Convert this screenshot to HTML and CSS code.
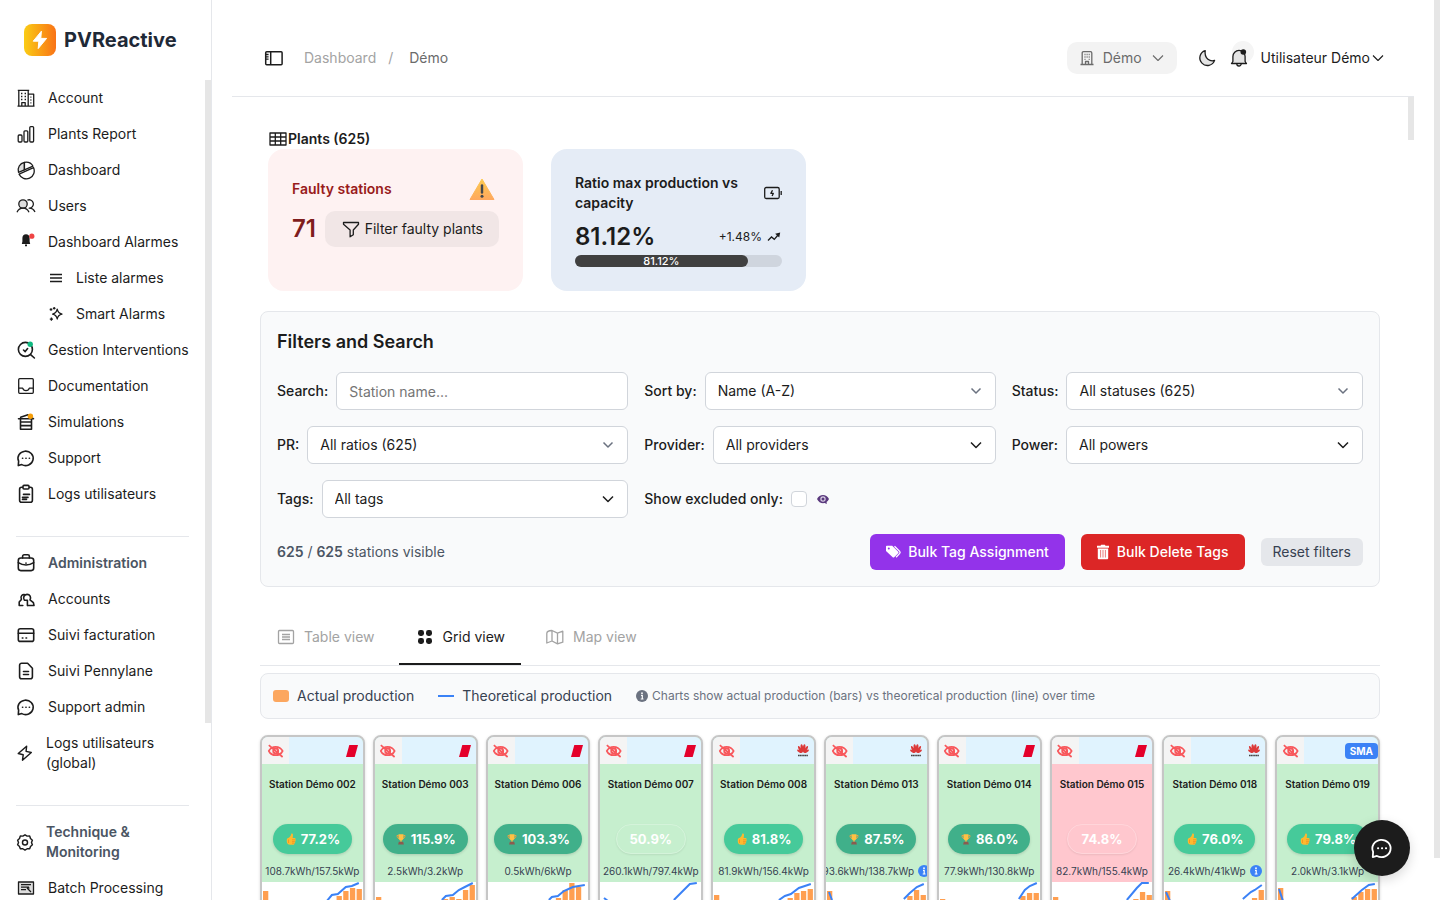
FILE: index.html
```
<!DOCTYPE html>
<html lang="fr">
<head>
    <meta charset="UTF-8">
    <meta name="viewport" content="width=device-width, initial-scale=1.0">
    <title>PVReactive</title>
    <link rel="stylesheet" href="styles.css">
</head>
<body>
    <aside class="sidebar">
        <a class="brand" href="#">
            <span class="brand-logo">
                <svg viewBox="0 0 20 20" width="20" height="20"><path d="M11.4 1.2 3.2 11.2h5.6l-.6 7.4 8.4-10.2h-5.8z" fill="#fff" stroke="#fff" stroke-linejoin="round"/></svg>
            </span>
            <span class="brand-name">PVReactive</span>
        </a>
        <div class="nav-wrap">
            <nav class="nav">
                <a class="nav-item" href="#">
                    <svg class="icon" viewBox="0 0 20 20"><path d="M1.5 18.2h17M2.8 18V2.3h9.4V18M1.8 2.3h11.4M12.2 6.2h5.5V18M5.8 18v-3.4h3.4V18"/><path d="M5 5.5h1.4M8.6 5.5H10M5 8.5h1.4M8.6 8.5H10M5 11.5h1.4M8.6 11.5H10M14.4 9.2h1M14.4 12h1M14.4 14.8h1"/></svg>
                    <span>Account</span>
                </a>
                <a class="nav-item" href="#">
                    <svg class="icon" viewBox="0 0 20 20"><rect x="2.2" y="11" width="3.8" height="7" rx="1"/><rect x="8" y="6.8" width="3.8" height="11.2" rx="1"/><rect x="13.8" y="2.6" width="3.8" height="15.4" rx="1"/></svg>
                    <span>Plants Report</span>
                </a>
                <a class="nav-item" href="#">
                    <svg class="icon" viewBox="0 0 20 20"><path d="M8.4 2.3v7.5L2.5 12.3A7.8 7.8 0 0 1 8.4 2.3z" fill="#ddd"/><path d="M8.4 2.3c3.6-.6 7 .9 8.6 3.9l-8.6 3.6z"/><path d="M17.5 7.6a7.8 7.8 0 1 1-14.4 6.6z"/></svg>
                    <span>Dashboard</span>
                </a>
                <a class="nav-item" href="#">
                    <svg class="icon" viewBox="0 0 20 20"><circle cx="7" cy="8" r="4.2" fill="#ddd"/><path d="M1 16.2c1.2-2.6 3.4-4 6-4s4.8 1.4 6 4M11.4 4.2a4.2 4.2 0 1 1 1.8 8c2.6 0 4.6 1.4 5.8 3.8"/></svg>
                    <span>Users</span>
                </a>
                <a class="nav-item" href="#">
                    <svg class="icon" viewBox="0 0 20 20"><path d="M10 2.2c-2.2 0-3.6 1.6-3.6 3.8v3.6L5.800 12h8.400l-.6-2.400V6c0-2.200-1.400-3.800-3.600-3.800z" fill="#1c1c1c" stroke="none"/><path d="M9 13.4h2" stroke-width="1.6"/><circle cx="15.8" cy="4.2" r="2.6" fill="#ef4444" stroke="none"/></svg>
                    <span>Dashboard Alarmes</span>
                </a>
                <a class="nav-item sub" href="#">
                    <svg class="icon small" viewBox="0 0 16 16"><path d="M2 4.5h12M2 8h12M2 11.5h12"/></svg>
                    <span>Liste alarmes</span>
                </a>
                <a class="nav-item sub" href="#">
                    <svg class="icon small" viewBox="0 0 16 16"><path d="M9.2 3.2c.5 2.8 1.6 4.2 4.8 4.9-3.2.7-4.3 2-4.8 4.9-.5-2.9-1.6-4.2-4.6-4.9 3-.7 4.1-2.1 4.6-4.9z"/><path d="M6.2 1v2.6M4.9 2.3h2.6M3 2.2v2.6M1.7 3.5h2.6M3.4 11.5v3.2M1.8 13.1H5"/></svg>
                    <span>Smart Alarms</span>
                </a>
                <a class="nav-item" href="#">
                    <svg class="icon bold" viewBox="0 0 20 20"><circle cx="9.4" cy="9.4" r="7"/><path d="m14.600 14.600 3.800 3.400M7.500 10l1.700 1.600 2.400-3"/><circle cx="14.2" cy="4.2" r="2.7" fill="#10b981" stroke="none"/></svg>
                    <span>Gestion Interventions</span>
                </a>
                <a class="nav-item" href="#">
                    <svg class="icon" viewBox="0 0 20 20"><rect x="2.7" y="2.7" width="14.6" height="14.6" rx="1"/><path d="M2.7 12.2h4c.4 1.6 1.6 2.4 3.300 2.400s2.900-.8 3.300-2.400h4"/></svg>
                    <span>Documentation</span>
                </a>
                <a class="nav-item" href="#">
                    <svg class="icon bold" viewBox="0 0 20 20"><path d="M2.5 6.800h15L12 2.800 4.600 5.200M4.500 7v10.200h11V7M4.500 10h11M4.500 13.600h11"/><circle cx="14.4" cy="4.2" r="2.7" fill="#f59e0b" stroke="none"/></svg>
                    <span>Simulations</span>
                </a>
                <a class="nav-item" href="#">
                    <svg class="icon bold" viewBox="0 0 20 20"><path d="M2.3 17.6l.3-4.4a7.6 7.2 0 1 1 3.2 3.4z"/><path d="M6.500 10.200h.2M9.900 10.200h.2M13.300 10.200h.2"/></svg>
                    <span>Support</span>
                </a>
                <a class="nav-item" href="#">
                    <svg class="icon bold" viewBox="0 0 20 20"><rect x="3.6" y="3.2" width="12.8" height="15" rx="2"/><rect x="7" y="1.4" width="6" height="3.6" rx="1" fill="#fff"/><path d="M7.500 10.400h6M6.500 13.400h5.500M6.500 15.400h4"/></svg>
                    <span>Logs utilisateurs</span>
                </a>
                <hr class="nav-divider">
                <a class="nav-item heading" href="#">
                    <svg class="icon bold" viewBox="0 0 20 20"><rect x="2.3" y="5" width="15.4" height="12.6" rx="2.5"/><path d="M6.600 5V3.400c0-1 .6-1.600 1.600-1.600h3.600c1 0 1.600.6 1.600 1.600V5M2.300 9.600c4.600 3 10.800 3 15.400 0M10 10v.2"/></svg>
                    <span>Administration</span>
                </a>
                <a class="nav-item" href="#">
                    <svg class="icon bold" viewBox="0 0 20 20"><path d="M8.200 10.800C6.800 9 8 5.400 11 5.400s4.400 3 3 5.400l3.400 2.800.6 2.900h-6.400M9.400 5.800C6.400 4.800 4 7 5.400 10.400L3.200 13v3.500h3.600M8.400 11.200h3v5.400"/></svg>
                    <span>Accounts</span>
                </a>
                <a class="nav-item" href="#">
                    <svg class="icon bold" viewBox="0 0 20 20"><rect x="2.3" y="3.8" width="15.4" height="12.6" rx="2"/><path d="M2.300 8.200h15.400M6.300 13h.6M10 13h.6"/></svg>
                    <span>Suivi facturation</span>
                </a>
                <a class="nav-item" href="#">
                    <svg class="icon bold" viewBox="0 0 20 20"><path d="M5.600 2.300h6l4.800 4.900v8.500a2 2 0 0 1-2 2H5.600a2 2 0 0 1-2-2V4.300a2 2 0 0 1 2-2zM7.500 10.500h5M7.500 13.500h5"/></svg>
                    <span>Suivi Pennylane</span>
                </a>
                <a class="nav-item" href="#">
                    <svg class="icon bold" viewBox="0 0 20 20"><path d="M2.3 17.6l.3-4.4a7.6 7.2 0 1 1 3.2 3.4z"/><path d="M6.500 10.200h.2M9.900 10.200h.2M13.300 10.200h.2"/></svg>
                    <span>Support admin</span>
                </a>
                <a class="nav-item wrapped" href="#">
                    <svg class="icon bold" viewBox="0 0 20 20"><path d="M11.800 2.500 2.500 10.500l5.500 1.500-.8 6L17 9.500l-5.800-1.300z"/></svg>
                    <span>Logs utilisateurs (global)</span>
                </a>
                <hr class="nav-divider">
                <a class="nav-item heading wrapped" href="#">
                    <svg class="icon bold" viewBox="0 0 20 20"><path d="M10 2l2.400 1.500 2.800-.1.900 2.700 2.100 1.900-1 2.500 1 2.500-2.100 1.900-.9 2.700-2.800-.1L10 19l-2.400-1.500-2.800.1-.9-2.700L1.800 13l1-2.500-1-2.500 2.100-1.900.9-2.700 2.800.1z"/><circle cx="10" cy="10.500" r="2.800"/></svg>
                    <span>Technique &amp; Monitoring</span>
                </a>
                <a class="nav-item" href="#">
                    <svg class="icon" viewBox="0 0 20 20"><rect x="2.5" y="4" width="15" height="12" fill="#ddd"/><path d="M5 6.700h10M5 9.200h8M5 11.700h5M11 10l4 4M11 10h2.600" stroke-width="1.2"/></svg>
                    <span>Batch Processing</span>
                </a>
            </nav>
            <div class="rail"><div class="thumb nav-thumb"></div></div>
        </div>
    </aside>

    <div class="page">
        <header class="topbar">
            <button class="icon-btn" type="button" aria-label="Toggle sidebar">
                <svg class="icon" viewBox="0 0 20 20"><rect x="1.7" y="3.7" width="16.4" height="13" rx="1" stroke-width="1.5"/><path d="M6.700 3.700v13" stroke-width="1.5"/><path d="M2 6.500h2.600M2 8.800h2.600M2 11.100h2.600"/></svg>
            </button>
            <nav class="breadcrumb">
                <a href="#">Dashboard</a>
                <span class="sep">/</span>
                <span class="current">Démo</span>
            </nav>
            <button class="account-btn" type="button">
                <svg class="icon small" viewBox="0 0 16 16"><path d="M1.500 14.500h13M3.200 14.500V3c0-.8.500-1.300 1.300-1.300h7c.8 0 1.300.5 1.300 1.300v11.500M6.500 14.500v-3h3v3"/><path d="M5.500 4.500h1M7.600 4.500h1M9.700 4.500h1M5.500 7h1M7.600 7h1M9.700 7h1M5.500 9.300h1M9.700 9.300h1"/></svg>
                <span>Démo</span>
                <svg class="icon chev" viewBox="0 0 12 12"><path d="m1 3.500 5 5 5-5"/></svg>
            </button>
            <button class="icon-btn" type="button" aria-label="Dark mode">
                <svg class="icon" viewBox="0 0 20 20"><path d="M8.200 2.600a7.600 7.600 0 1 0 9.400 9.800c-4 1.600-10.600-1.400-9.400-9.800z" fill="#e4e4e4"/></svg>
            </button>
            <button class="icon-btn bell" type="button" aria-label="Notifications">
                <svg class="icon" viewBox="0 0 20 20"><path d="M2.500 15.500h15l-1.400-2V8.500a6.100 6.100 0 0 0-12.200 0v5z" fill="#e4e4e4"/><path d="M7.800 15.800a2.200 2.200 0 0 0 4.400 0"/><circle cx="14.3" cy="4" r="2.8" fill="#1c1c1c" stroke="none"/></svg>
            </button>
            <button class="user-btn" type="button">
                <span>Utilisateur Démo</span>
                <svg class="icon chev" viewBox="0 0 12 12"><path d="m1 3.500 5 5 5-5"/></svg>
            </button>
        </header>

        <div class="content-wrap">
            <main class="content">
                <h1 class="title">
                    <svg class="icon" viewBox="0 0 20 20"><path d="M2 4h16v12H2zM2 8h16M2 12h16M7.300 4v12M12.700 4v12"/></svg>
                    Plants (625)
                </h1>

                <section class="stats">
                    <article class="stat faulty">
                        <div class="stat-head">
                            <h2>Faulty stations</h2>
                            <svg class="warn" viewBox="0 0 26 24">
                                <defs><linearGradient id="warnFill" x1="0" y1="0" x2="0" y2="1"><stop offset="0" stop-color="#fcc94f"/><stop offset="1" stop-color="#ffa95e"/></linearGradient></defs>
                                <path d="M13 2 25 22.500H1z" fill="url(#warnFill)" stroke="url(#warnFill)" stroke-linejoin="round"/>
                                <path d="M13 8.500v7" stroke="#44484d" stroke-width="2.4" stroke-linecap="round"/>
                                <circle cx="13" cy="19.3" r="1.5" fill="#44484d"/>
                            </svg>
                        </div>
                        <div class="stat-body">
                            <strong>71</strong>
                            <button class="filter-btn" type="button">
                                <svg class="icon" viewBox="0 0 20 20"><path d="M2.500 3.500h15v1.800l-5.200 5.700v4.700l-3.200 2.100v-6.800L2.500 5.300z"/></svg>
                                Filter faulty plants
                            </button>
                        </div>
                    </article>
                    <article class="stat ratio">
                        <div class="stat-head">
                            <h2>Ratio max production vs capacity</h2>
                            <svg class="icon" viewBox="0 0 20 20"><rect x="2.7" y="4.5" width="14.5" height="11" rx="1.5"/><path d="M19.200 8v4M10.500 7.200l-1.600 3.200h2.400l-1.200 2.600"/></svg>
                        </div>
                        <div class="stat-body">
                            <strong>81.12%</strong>
                            <span class="trend">+1.48%
                                <svg viewBox="0 0 16 16" width="16" height="16"><path d="M2 11.500 5.500 8l2.800 2.300L12 6" fill="none" stroke="#1c1c1c" stroke-width="1.3"/><path d="M9.200 4.800 14.200 3.600l-1 5z" fill="#1c1c1c"/></svg>
                            </span>
                        </div>
                        <div class="progress"><div class="progress-bar">81.12%</div></div>
                    </article>
                </section>

                <section class="filters">
                    <h2>Filters and Search</h2>
                    <div class="filter-grid">
                        <div class="field">
                            <label for="search">Search:</label>
                            <input class="control" type="text" id="search" placeholder="Station name...">
                        </div>
                        <div class="field">
                            <label for="sort">Sort by:</label>
                            <div class="select muted">
                                <select class="control" id="sort"><option>Name (A-Z)</option></select>
                                <svg class="icon chev" viewBox="0 0 12 12"><path d="m1.500 3.500 4.500 4.500 4.500-4.500"/></svg>
                            </div>
                        </div>
                        <div class="field">
                            <label for="status">Status:</label>
                            <div class="select muted">
                                <select class="control" id="status"><option>All statuses (625)</option></select>
                                <svg class="icon chev" viewBox="0 0 12 12"><path d="m1.500 3.500 4.500 4.500 4.500-4.500"/></svg>
                            </div>
                        </div>
                        <div class="field">
                            <label for="pr">PR:</label>
                            <div class="select muted">
                                <select class="control" id="pr"><option>All ratios (625)</option></select>
                                <svg class="icon chev" viewBox="0 0 12 12"><path d="m1.500 3.500 4.500 4.500 4.500-4.500"/></svg>
                            </div>
                        </div>
                        <div class="field">
                            <label for="provider">Provider:</label>
                            <div class="select">
                                <select class="control" id="provider"><option>All providers</option></select>
                                <svg class="icon chev" viewBox="0 0 12 12"><path d="m1 3.500 5 5 5-5"/></svg>
                            </div>
                        </div>
                        <div class="field">
                            <label for="power">Power:</label>
                            <div class="select">
                                <select class="control" id="power"><option>All powers</option></select>
                                <svg class="icon chev" viewBox="0 0 12 12"><path d="m1 3.500 5 5 5-5"/></svg>
                            </div>
                        </div>
                        <div class="field">
                            <label for="tags">Tags:</label>
                            <div class="select">
                                <select class="control" id="tags"><option>All tags</option></select>
                                <svg class="icon chev" viewBox="0 0 12 12"><path d="m1 3.500 5 5 5-5"/></svg>
                            </div>
                        </div>
                        <div class="field">
                            <label for="excluded">Show excluded only:</label>
                            <input class="check" type="checkbox" id="excluded">
                            <svg class="eye" viewBox="0 0 16 16"><path d="M2 8c2.500-5.200 9.500-5.200 12 0-.6 1.300-1.400 2.300-2.400 3l.2 2-2.200-.9C6.400 12.700 3.500 11.200 2 8z" fill="#5b3a7e"/><circle cx="8" cy="8" r="2.7" fill="#d9cfe3"/><circle cx="8" cy="8" r="1.5" fill="#5b3a7e"/></svg>
                        </div>
                    </div>
                    <div class="filter-foot">
                        <p class="count"><b>625</b> / <b>625</b> stations visible</p>
                        <button class="btn purple" type="button">
                            <svg viewBox="0 0 14 16" width="14" height="16"><path d="M0 2.500C0 2 .3 1.700.8 1.700h5.400l6 6c.5.500.5 1 0 1.500l-4 4c-.5.500-1 .5-1.500 0L0 7z" fill="#fff"/><circle cx="2.8" cy="4.5" r="1" fill="#9333ea"/><path d="M8.500 2.200l5.200 5.200c.6.700.6 1.300 0 2l-3.600 3.800" fill="none" stroke="#fff" stroke-width="1.3"/></svg>
                            Bulk Tag Assignment
                        </button>
                        <button class="btn red" type="button">
                            <svg viewBox="0 0 12 16" width="12" height="16"><path d="M0 1.800h3.500l.7-1h3.600l.7 1H12v2H0z" fill="#fff"/><path d="M.8 4.500h10.400V14c0 .8-.5 1.300-1.300 1.300H2.100c-.8 0-1.300-.5-1.300-1.300z" fill="#fff"/><path d="M3.600 6v7.500M6 6v7.500M8.400 6v7.500" stroke="#dc2626" stroke-width=".6"/></svg>
                            Bulk Delete Tags
                        </button>
                        <button class="reset" type="button">Reset filters</button>
                    </div>
                </section>

                <div class="tabs" role="tablist">
                    <button class="tab" type="button" role="tab">
                        <svg class="icon" viewBox="0 0 20 20"><rect x="2.5" y="3.5" width="15" height="13" rx="1"/><path d="M6 7.500h8M6 10h8M6 12.500h8"/></svg>
                        Table view
                    </button>
                    <button class="tab active" type="button" role="tab" aria-selected="true">
                        <svg class="icon dots" viewBox="0 0 20 20"><rect x="3" y="3" width="6" height="6" rx="2.4"/><rect x="11" y="3" width="6" height="6" rx="2.4"/><rect x="3" y="11" width="6" height="6" rx="2.4"/><rect x="11" y="11" width="6" height="6" rx="2.4"/></svg>
                        Grid view
                    </button>
                    <button class="tab" type="button" role="tab">
                        <svg class="icon" viewBox="0 0 20 20"><path d="M1.800 16V6.500C1.800 5 3.500 3.500 7 3.500l5.500 2.700 5.300-2v11l-5.300 1.600L7 14l-5.200 2zM7 3.500V14M12.500 6.200v10.400"/></svg>
                        Map view
                    </button>
                </div>

                <div class="legend">
                    <span class="legend-item"><i class="swatch"></i>Actual production</span>
                    <span class="legend-item"><i class="dash"></i>Theoretical production</span>
                    <span class="legend-note">
                        <svg viewBox="0 0 12 12" width="12" height="12"><circle cx="6" cy="6" r="6" fill="#6b7280"/><path d="M5 5.300h1.300V9M4.700 9h2.800" stroke="#fff" stroke-width="1.2" fill="none"/><circle cx="6" cy="3.2" r=".9" fill="#fff"/></svg>
                        Charts show actual production (bars) vs theoretical production (line) over time
                    </span>
                </div>

                <section class="stations" id="stations"></section>
            </main>
            <div class="rail"><div class="thumb content-thumb"></div></div>
        </div>
    </div>
    <div class="rail"><div class="thumb page-thumb"></div></div>

    <button class="chat-btn" type="button" aria-label="Chat">
        <svg viewBox="0 0 20 20" width="24" height="24" fill="none" stroke="#fff" stroke-width="1.5" stroke-linejoin="round" stroke-linecap="round"><path d="M2.3 17.6l.3-4.4a7.6 7.2 0 1 1 3.2 3.4z"/><path d="M6.600 10.200h.3M9.900 10.200h.3M13.200 10.200h.3"/></svg>
    </button>

    <script>
        // bars: [slot, top of the bar], line: groups of points
        var stations = [
            { name: '002', pct: '77.2%', level: 'good', energy: '108.7kWh/157.5kWp', brand: 'fronius', bars: [[0,9],[11,14],[12,9],[13,6],[14,7]], line: ['65,19 70,13 76,12 84,5 90,4 97,1'] },
            { name: '003', pct: '115.9%', level: 'best', energy: '2.5kWh/3.2kWp', brand: 'fronius', bars: [[0,15],[10,17],[11,15],[12,17],[13,8],[14,3]], line: ['67,18 71,14 78,13 84,8 90,5 98,1'] },
            { name: '006', pct: '103.3%', level: 'best', energy: '0.5kWh/6kWp', brand: 'fronius', bars: [[10,16],[11,8],[12,1],[13,5]], line: ['61,18 64,15 70,14 76,9 85,5 97,3'] },
            { name: '007', pct: '50.9%', level: 'none', energy: '260.1kWh/797.4kWp', brand: 'fronius', bars: [], line: ['4,16 8,19', '74,18 90,2 97,1'] },
            { name: '008', pct: '81.8%', level: 'good', energy: '81.9kWh/156.4kWp', brand: 'huawei', bars: [[0,13],[11,16],[12,11],[13,9],[14,7]], line: ['66,18 72,14 78,12 86,6 92,4 98,2'] },
            { name: '013', pct: '87.5%', level: 'best', energy: '93.6kWh/138.7kWp', brand: 'huawei', info: true, bars: [[0,9],[12,14],[13,8],[14,13]], line: ['3,10 6,18', '78,17 84,11 91,5 98,2'] },
            { name: '014', pct: '86.0%', level: 'best', energy: '77.9kWh/130.8kWp', brand: 'fronius', bars: [[0,17],[12,14],[13,11],[14,11]], line: ['80,17 86,8 91,4 98,1'] },
            { name: '015', pct: '74.8%', level: 'none', energy: '82.7kWh/155.4kWp', brand: 'fronius', fault: true, bars: [[0,15],[12,17],[13,10],[14,13]], line: ['75,18 85,6 90,1 97,1'] },
            { name: '018', pct: '76.0%', level: 'good', energy: '26.4kWh/41kWp', brand: 'huawei', info: true, bars: [[0,9],[13,16],[14,8]], line: ['2,10 6,19', '79,17 87,10 91,8 98,3'] },
            { name: '019', pct: '79.8%', level: 'good', energy: '2.0kWh/3.1kWp', brand: 'sma', bars: [[0,6],[11,15],[12,10],[13,7],[14,7]], line: ['2,7 6,19', '75,17 85,8 92,3 98,2'] }
        ];

        var brands = {
            fronius: '<svg viewBox="0 0 12 12" width="12" height="12"><path d="M3.300 0H12L8.700 12H0z" fill="#e4002b"/></svg>',
            huawei: '<svg viewBox="0 0 12 13" width="12" height="13"><g fill="#dc3a3a"><ellipse cx="4.900" cy="4.200" rx="1.300" ry="4" transform="rotate(-6 4.900 4.200)"/><ellipse cx="7.100" cy="4.200" rx="1.300" ry="4" transform="rotate(6 7.100 4.200)"/><ellipse cx="3.200" cy="5.400" rx="1.200" ry="3.900" transform="rotate(-30 3.200 5.400)"/><ellipse cx="8.800" cy="5.400" rx="1.200" ry="3.900" transform="rotate(30 8.800 5.400)"/><ellipse cx="2.500" cy="7.200" rx="1.100" ry="2.700" transform="rotate(-58 2.500 7.200)"/><ellipse cx="9.500" cy="7.200" rx="1.100" ry="2.700" transform="rotate(58 9.500 7.200)"/></g><path d="M1 11.500h10" stroke="#444" stroke-width="1.500" stroke-dasharray="1.400 .3"/></svg>',
            sma: '<span class="sma">SMA</span>'
        };

        var badges = {
            good: '<svg viewBox="0 0 12 14" width="12" height="14"><path d="M6.300 1.700c.9-.4 1.800.2 1.700 1.400L7.700 6h1.700c1.300 0 1.600 1.200.9 1.800.5.600.4 1.400-.2 1.800.3.700 0 1.300-.6 1.600.1.900-.5 1.500-1.400 1.500H5.200c-2 0-3.400-1.300-3.400-3.300V8c0-.9.500-1.500 1.300-1.900C4.700 5.300 5.900 3.700 6.300 1.700z" fill="#ffb92e"/><path d="M7 7.800h3M7 9.600h2.900M7 11.200h2.300M3.500 7.500v3.500" stroke="#ee8a22" stroke-width=".7"/></svg>',
            best: '<svg viewBox="0 0 12 14" width="12" height="14"><path d="M3.500 3.500H2c0 1.800.7 2.800 2 3.200M8.500 3.500H10c0 1.800-.7 2.800-2 3.200" fill="none" stroke="#f2a03d"/><path d="M3.500 2.200h5v3c0 2-.9 3-2 3.200v1.800h-1V8.400c-1.100-.2-2-1.200-2-3.200z" fill="#ffc043"/><path d="M3.800 9.700h4.400l.7 2.900H3.100z" fill="#8c5a4f"/></svg>',
            none: ''
        };

        var eyeOff = '<svg viewBox="0 0 18 18" width="18" height="18" fill="none" stroke="#f8585c" stroke-width="1.700"><path d="M1.800 9c2.800-5.600 11-5.600 13.800 0-2.800 5.600-11 5.600-13.800 0z"/><circle cx="8.700" cy="9" r="2.400" stroke-width="2"/><path d="M1.800 3.200 15.600 15" stroke-width="1.700"/></svg>';
        var info = '<svg viewBox="0 0 12 12" width="12" height="12"><circle cx="6" cy="6" r="6" fill="#3b82f6"/><path d="M5 5.300h1.200V9M4.700 9h2.800" stroke="#fff" stroke-width="1.200" fill="none"/><circle cx="6" cy="3.200" r=".9" fill="#fff"/></svg>';

        function chart(s) {
            var out = '<svg class="chart" viewBox="0 0 101 60" preserveAspectRatio="none">';
            s.bars.forEach(function (b) {
                out += '<rect x="' + (1 + b[0] * 6.7) + '" y="' + b[1] + '" width="5.3" height="' + (60 - b[1]) + '" fill="#ff9f50"/>';
            });
            s.line.forEach(function (l) {
                out += '<polyline points="' + l + '" fill="none" stroke="#3b82f6" stroke-width="2"/>';
            });
            return out + '</svg>';
        }

        document.getElementById('stations').innerHTML = stations.map(function (s) {
            return '<article class="station' + (s.fault ? ' fault' : '') + '">' +
                '<div class="station-top"><button class="hide-btn" type="button" aria-label="Exclude station">' + eyeOff + '</button>' + brands[s.brand] + '</div>' +
                '<h3>Station Démo ' + s.name + '</h3>' +
                '<div class="pill ' + s.level + '">' + badges[s.level] + '<span>' + s.pct + '</span></div>' +
                '<p class="energy"><span>' + s.energy + '</span>' + (s.info ? info : '') + '</p>' +
                chart(s) + '</article>';
        }).join('');
    </script>
</body>
</html>
```
FILE: styles.css
```
* {
    box-sizing: border-box;
}
body {
    display: flex;
    height: 100vh;
    margin: 0;
    overflow: hidden;
    background-color: #fff;
    color: #1c1c1c;
    font-family: Inter, "Liberation Sans", sans-serif;
    font-size: 14px;
    line-height: 20px;
}
h1, h2, h3, p {
    margin: 0;
}
a {
    color: inherit;
    text-decoration: none;
}
button {
    display: flex;
    align-items: center;
    padding: 0;
    border: 0;
    background: none;
    color: inherit;
    font: inherit;
    cursor: pointer;
}
svg {
    flex-shrink: 0;
}
.icon {
    width: 20px;
    height: 20px;
    fill: none;
    stroke: currentColor;
    stroke-width: 1.3;
    stroke-linejoin: round;
}
.icon.bold {
    stroke-width: 1.6;
    stroke-linecap: round;
}
.icon.small {
    width: 16px;
    height: 16px;
}
.icon.chev {
    width: 12px;
    height: 12px;
    stroke-width: 1.1;
}

/* scroll rails */
.rail {
    flex: 0 0 6px;
}
.thumb {
    background-color: #e6e6e6;
}
.nav-thumb {
    height: 78.4%;
}
.content-thumb {
    height: 5.4%;
}
.page-thumb {
    height: 95.3%;
}

/* sidebar */
.sidebar {
    display: flex;
    flex-direction: column;
    flex: 0 0 212px;
    border-right: 1px solid #e5e7eb;
}
.brand {
    display: flex;
    align-items: center;
    gap: 8px;
    flex: 0 0 80px;
    padding: 0 24px;
}
.brand-logo {
    display: flex;
    align-items: center;
    justify-content: center;
    width: 32px;
    height: 32px;
    border-radius: 8px;
    background: linear-gradient(90deg, #facc15, #f97316);
}
.brand-name {
    color: #1f2937;
    font-size: 20px;
    font-weight: 700;
    line-height: 28px;
}
.nav-wrap {
    display: flex;
    flex: 1;
    min-height: 0;
}
.nav {
    flex: 1;
    min-width: 0;
    overflow: hidden;
}
.nav-item {
    display: flex;
    align-items: center;
    gap: 12px;
    padding: 8px 12px 8px 16px;
}
.nav-item.sub {
    padding-left: 48px;
}
.nav-item.heading {
    color: #4b5563;
    font-weight: 600;
}
.nav-item.heading .icon {
    color: #1c1c1c;
}
.nav-item.wrapped .icon {
    width: 18px;
    height: 18px;
}
.nav-divider {
    margin: 24px 16px 8px;
    border: 0;
    border-top: 1px solid #e5e7eb;
}

/* page */
.page {
    display: flex;
    flex-direction: column;
    flex: 1;
    min-width: 0;
    padding: 20px 20px 0;
}
.topbar {
    display: flex;
    align-items: center;
    flex: 0 0 77px;
    padding: 0 30px 0 32px;
    border-bottom: 1px solid #e5e7eb;
}
.breadcrumb {
    display: flex;
    flex: 1;
    gap: 12px;
    padding-left: 20px;
    color: #a3a3a3;
}
.breadcrumb .current {
    padding-left: 4px;
    color: #6b6b6b;
}
.account-btn {
    gap: 8px;
    height: 32px;
    margin-right: 20px;
    padding: 0 13px 0 12px;
    border-radius: 10px;
    background-color: #f3f3f3;
    color: #6b6b6b;
}
.account-btn .chev {
    margin-left: 2px;
}
.bell {
    position: relative;
    isolation: isolate;
    margin: 0 12px;
}
.bell::before {
    content: "";
    position: absolute;
    top: -7px;
    right: -5px;
    z-index: -1;
    width: 22px;
    height: 22px;
    border-radius: 50%;
    background-color: #f5f5f5;
}
.user-btn {
    gap: 2px;
}
.content-wrap {
    display: flex;
    flex: 1;
    min-height: 0;
}
.content {
    flex: 1;
    min-width: 0;
    padding: 32px 28px 0;
    overflow: hidden;
}
.title {
    display: flex;
    align-items: center;
    padding-left: 8px;
    font-size: 14px;
    font-weight: 600;
}

/* stat cards */
.stats {
    display: flex;
    gap: 28px;
    padding: 0 8px;
}
.stat {
    width: 255px;
    min-height: 142px;
    padding: 24px;
    border-radius: 16px;
}
.stat h2 {
    font-size: 14px;
    font-weight: 600;
}
.stat strong {
    font-size: 24px;
    font-weight: 600;
    line-height: 32px;
}
.stat-head, .stat-body {
    display: flex;
    align-items: center;
    justify-content: space-between;
}
.faulty {
    background-color: #fef2f2;
    color: #991b1b;
}
.faulty .stat-head {
    height: 32px;
    padding-right: 4px;
}
.faulty .stat-body {
    margin-top: 6px;
}
.faulty strong {
    color: #7f1d1d;
}
.warn {
    width: 26px;
    height: 24px;
}
.filter-btn {
    gap: 4px;
    height: 36px;
    padding: 0 16px;
    border-radius: 10px;
    background-color: #f1e6e6;
    color: #1c1c1c;
    white-space: nowrap;
}
.ratio {
    background-color: #e5ecf6;
}
.ratio .stat-body {
    margin-top: 8px;
}
.trend {
    display: flex;
    align-items: center;
    gap: 4px;
    font-size: 12px;
}
.progress {
    height: 12px;
    margin-top: 2px;
    border-radius: 6px;
    background-color: #cfd5de;
}
.progress-bar {
    width: 83.5%;
    height: 12px;
    border-radius: 6px;
    background-color: #404040;
    color: #fff;
    font-size: 11px;
    font-weight: 500;
    line-height: 12px;
    text-align: center;
}

/* filters */
.filters {
    margin-top: 20px;
    padding: 16px;
    border: 1px solid #e5e7eb;
    border-radius: 8px;
    background-color: #f9fafb;
}
.filters h2 {
    font-size: 18px;
    font-weight: 600;
    line-height: 28px;
}
.filter-grid {
    display: grid;
    grid-template-columns: repeat(3, minmax(0, 1fr));
    gap: 16px;
    margin: 16px 0;
}
.field {
    display: flex;
    align-items: center;
    gap: 8px;
}
.field label {
    font-weight: 500;
    white-space: nowrap;
}
.select {
    position: relative;
    flex: 1;
    min-width: 0;
}
.select .chev {
    position: absolute;
    top: 13px;
    right: 14px;
    stroke-width: 1.5;
    pointer-events: none;
}
.select.muted .chev {
    color: #6b7280;
}
.control {
    flex: 1;
    width: 100%;
    min-width: 0;
    height: 38px;
    padding: 0 12px;
    border: 1px solid #d1d5db;
    border-radius: 6px;
    background-color: #fff;
    color: #1c1c1c;
    font: inherit;
    appearance: none;
}
.control::placeholder {
    color: #757575;
}
.check {
    width: 16px;
    height: 16px;
    margin: 0;
    border: 1px solid #d1d5db;
    border-radius: 4px;
    background-color: #fff;
    appearance: none;
}
.eye {
    width: 16px;
    height: 16px;
}
.filter-foot {
    display: flex;
    align-items: center;
    gap: 16px;
}
.count {
    flex: 1;
    color: #4b5563;
}
.count b {
    font-weight: 600;
}
.btn {
    gap: 8px;
    height: 36px;
    padding: 0 16px;
    border-radius: 6px;
    color: #fff;
    font-weight: 500;
}
.btn svg {
    overflow: visible;
}
.purple {
    background-color: #9333ea;
}
.red {
    background-color: #dc2626;
}
.reset {
    height: 28px;
    padding: 0 12px;
    border-radius: 6px;
    background-color: #e5e7eb;
    color: #374151;
}

/* tabs */
.tabs {
    display: flex;
    gap: 8px;
    margin-top: 22px;
    border-bottom: 1px solid #e5e7eb;
}
.tab {
    gap: 8px;
    height: 56px;
    padding: 2px 16px 0;
    border-bottom: 2px solid transparent;
    color: #a3a3a3;
}
.tab.active {
    border-bottom-color: #1c1c1c;
    color: #1c1c1c;
}
.icon.dots {
    fill: currentColor;
    stroke: none;
}
.legend {
    display: flex;
    align-items: center;
    gap: 24px;
    height: 46px;
    margin-top: 7px;
    padding: 0 12px;
    border: 1px solid #e5e7eb;
    border-radius: 8px;
    background-color: #f9fafb;
    color: #374151;
}
.legend-item {
    display: flex;
    align-items: center;
    gap: 8px;
}
.swatch {
    width: 16px;
    height: 12px;
    border-radius: 3px;
    background-color: #fca75f;
}
.dash {
    width: 16px;
    height: 2px;
    background-color: #3b82f6;
}
.legend-note {
    display: flex;
    align-items: center;
    gap: 4px;
    color: #6b7280;
    font-size: 12px;
}

/* station cards */
.stations {
    display: grid;
    grid-template-columns: repeat(10, minmax(0, 1fr));
    gap: 8px;
    margin-top: 16px;
}
.station {
    display: flex;
    flex-direction: column;
    align-items: center;
    overflow: hidden;
    border: 2px solid #c6c6c6;
    border-radius: 8px;
    background-color: #c6efce;
    box-shadow: 0 1px 3px rgba(0, 0, 0, 0.15);
}
.station.fault {
    background-color: #ffc7ce;
}
.station-top {
    display: flex;
    align-items: center;
    justify-content: space-between;
    align-self: stretch;
    height: 27px;
    padding-right: 5px;
    background-color: #e0f3fe;
}
.station-top:has(.sma) {
    padding-right: 0;
}
.hide-btn {
    justify-content: center;
    width: 27px;
    height: 27px;
    background-color: #f4f4f4;
}
.sma {
    padding: 0 5px;
    border-radius: 4px;
    background-color: #3b82f6;
    color: #fff;
    font-size: 10px;
    font-weight: 700;
    line-height: 16px;
}
.station h3 {
    margin-top: 10px;
    font-size: 10px;
    font-weight: 600;
    white-space: nowrap;
}
.pill {
    display: flex;
    align-items: center;
    justify-content: center;
    gap: 4px;
    min-width: 70px;
    height: 30px;
    margin-top: 30px;
    padding: 0 12px;
    border-radius: 15px;
    color: #fff;
    font-size: 13px;
    font-weight: 700;
    box-shadow: 0 1px 3px rgba(0, 0, 0, 0.15);
}
.pill.good {
    background-color: #46ca9a;
}
.pill.best {
    background-color: #40b08a;
}
.pill.none {
    border: 1px solid rgba(255, 255, 255, 0.25);
    box-shadow: 0 1px 2px rgba(0, 0, 0, 0.08);
}
.energy {
    display: flex;
    align-items: center;
    justify-content: center;
    gap: 4px;
    margin-top: 7px;
    color: #374151;
    font-size: 10px;
    white-space: nowrap;
}
.chart {
    display: block;
    width: 100%;
    height: 60px;
    margin-top: 1px;
    background-color: #fff;
}

/* chat bubble over the page */
.chat-btn {
    position: fixed;
    right: 30px;
    bottom: 24px;
    justify-content: center;
    width: 56px;
    height: 56px;
    border-radius: 50%;
    background-color: #1c1c1c;
    box-shadow: 0 4px 12px rgba(0, 0, 0, 0.15);
}
```
